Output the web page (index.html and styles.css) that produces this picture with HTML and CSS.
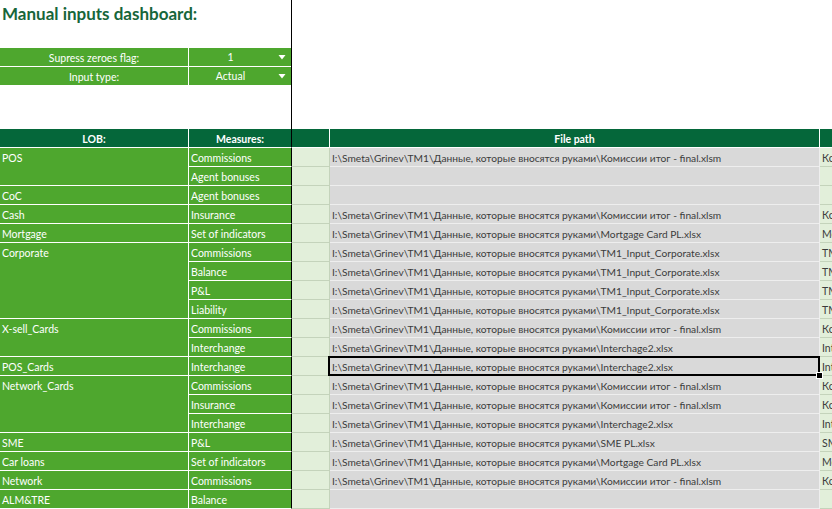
FILE: index.html
```html
<!DOCTYPE html>
<html lang="ru">
<head>
    <meta charset="UTF-8">
    <title>Manual inputs dashboard</title>
    <link rel="stylesheet" href="styles.css">
</head>
<body>
    <div class="top">
        <div class="top-pane">
            <h1 class="title">Manual inputs dashboard:</h1>
            <div class="filters">
                <div class="f-label">Supress zeroes flag:</div>
                <div class="f-value"><span>1</span><svg class="drop" width="8" height="6" viewBox="0 0 8 6"><path d="M0.5 1 H7.5 L4 5.5 Z" fill="#fff"/></svg></div>
                <div class="f-label">Input type:</div>
                <div class="f-value"><span>Actual</span><svg class="drop" width="8" height="6" viewBox="0 0 8 6"><path d="M0.5 1 H7.5 L4 5.5 Z" fill="#fff"/></svg></div>
            </div>
        </div>
    </div>

    <div class="sheet">
        <div class="cell h">LOB:</div>
        <div class="cell h frz">Measures:</div>
        <div class="cell h"></div>
        <div class="cell h">File path</div>
        <div class="cell h"></div>

        <div class="cell g lob span2">POS</div>
        <div class="cell g frz">Commissions</div>
        <div class="cell c"></div>
        <div class="cell d">I:\Smeta\Grinev\TM1\Данные, которые вносятся руками\Комиссии итог - final.xlsm</div>
        <div class="cell e">Комиссии итог</div>

        <div class="cell g frz">Agent bonuses</div>
        <div class="cell c"></div>
        <div class="cell d"></div>
        <div class="cell e"></div>

        <div class="cell g">CoC</div>
        <div class="cell g frz">Agent bonuses</div>
        <div class="cell c"></div>
        <div class="cell d"></div>
        <div class="cell e"></div>

        <div class="cell g">Cash</div>
        <div class="cell g frz">Insurance</div>
        <div class="cell c"></div>
        <div class="cell d">I:\Smeta\Grinev\TM1\Данные, которые вносятся руками\Комиссии итог - final.xlsm</div>
        <div class="cell e">Комиссии итог</div>

        <div class="cell g">Mortgage</div>
        <div class="cell g frz">Set of indicators</div>
        <div class="cell c"></div>
        <div class="cell d">I:\Smeta\Grinev\TM1\Данные, которые вносятся руками\Mortgage Card PL.xlsx</div>
        <div class="cell e">Mortgage Card PL</div>

        <div class="cell g lob span4">Corporate</div>
        <div class="cell g frz">Commissions</div>
        <div class="cell c"></div>
        <div class="cell d">I:\Smeta\Grinev\TM1\Данные, которые вносятся руками\TM1_Input_Corporate.xlsx</div>
        <div class="cell e">TM1_Input_Corporate</div>

        <div class="cell g frz">Balance</div>
        <div class="cell c"></div>
        <div class="cell d">I:\Smeta\Grinev\TM1\Данные, которые вносятся руками\TM1_Input_Corporate.xlsx</div>
        <div class="cell e">TM1_Input_Corporate</div>

        <div class="cell g frz">P&amp;L</div>
        <div class="cell c"></div>
        <div class="cell d">I:\Smeta\Grinev\TM1\Данные, которые вносятся руками\TM1_Input_Corporate.xlsx</div>
        <div class="cell e">TM1_Input_Corporate</div>

        <div class="cell g frz">Liability</div>
        <div class="cell c"></div>
        <div class="cell d">I:\Smeta\Grinev\TM1\Данные, которые вносятся руками\TM1_Input_Corporate.xlsx</div>
        <div class="cell e">TM1_Input_Corporate</div>

        <div class="cell g lob span2">X-sell_Cards</div>
        <div class="cell g frz">Commissions</div>
        <div class="cell c"></div>
        <div class="cell d">I:\Smeta\Grinev\TM1\Данные, которые вносятся руками\Комиссии итог - final.xlsm</div>
        <div class="cell e">Комиссии итог</div>

        <div class="cell g frz">Interchange</div>
        <div class="cell c"></div>
        <div class="cell d">I:\Smeta\Grinev\TM1\Данные, которые вносятся руками\Interchage2.xlsx</div>
        <div class="cell e">Interchage2</div>

        <div class="cell g">POS_Cards</div>
        <div class="cell g frz">Interchange</div>
        <div class="cell c"></div>
        <div class="cell d sel">I:\Smeta\Grinev\TM1\Данные, которые вносятся руками\Interchage2.xlsx</div>
        <div class="cell e">Interchage2</div>

        <div class="cell g lob span3">Network_Cards</div>
        <div class="cell g frz">Commissions</div>
        <div class="cell c"></div>
        <div class="cell d">I:\Smeta\Grinev\TM1\Данные, которые вносятся руками\Комиссии итог - final.xlsm</div>
        <div class="cell e">Комиссии итог</div>

        <div class="cell g frz">Insurance</div>
        <div class="cell c"></div>
        <div class="cell d">I:\Smeta\Grinev\TM1\Данные, которые вносятся руками\Комиссии итог - final.xlsm</div>
        <div class="cell e">Комиссии итог</div>

        <div class="cell g frz">Interchange</div>
        <div class="cell c"></div>
        <div class="cell d">I:\Smeta\Grinev\TM1\Данные, которые вносятся руками\Interchage2.xlsx</div>
        <div class="cell e">Interchage2</div>

        <div class="cell g">SME</div>
        <div class="cell g frz">P&amp;L</div>
        <div class="cell c"></div>
        <div class="cell d">I:\Smeta\Grinev\TM1\Данные, которые вносятся руками\SME PL.xlsx</div>
        <div class="cell e">SME PL</div>

        <div class="cell g">Car loans</div>
        <div class="cell g frz">Set of indicators</div>
        <div class="cell c"></div>
        <div class="cell d">I:\Smeta\Grinev\TM1\Данные, которые вносятся руками\Mortgage Card PL.xlsx</div>
        <div class="cell e">Mortgage Card PL</div>

        <div class="cell g">Network</div>
        <div class="cell g frz">Commissions</div>
        <div class="cell c"></div>
        <div class="cell d">I:\Smeta\Grinev\TM1\Данные, которые вносятся руками\Комиссии итог - final.xlsm</div>
        <div class="cell e">Комиссии итог</div>

        <div class="cell g">ALM&amp;TRE</div>
        <div class="cell g frz">Balance</div>
        <div class="cell c"></div>
        <div class="cell d"></div>
        <div class="cell e"></div>
    </div>
</body>
</html>
```

FILE: styles.css
```css
body {
    margin: 0;
    width: 832px;
    height: 509px;
    overflow: hidden;
    background: #fff;
    font-family: Lato, 'Liberation Sans', sans-serif;
    font-size: 10.5px;
    color: #333;
}

.top {
    display: flex;
    height: 129px;
}

.top-pane {
    width: 291px;
    border-right: 1px solid #000;
}

.title {
    margin: 0;
    height: 48px;
    box-sizing: border-box;
    padding: 4px 0 0 2px;
    font-size: 17px;
    line-height: 20px;
    font-weight: bold;
    color: #17663a;
}

.filters {
    display: grid;
    grid-template-columns: 189px 102px;
    grid-auto-rows: 19px;
}

.f-label,
.f-value {
    box-sizing: border-box;
    background: #4ea72e;
    color: #fff;
    border-bottom: 1px solid #fff;
    line-height: 20px;
    text-align: center;
}

.f-label {
    border-right: 1px solid #fff;
}

.f-value {
    display: flex;
    align-items: center;
}

.f-value span {
    flex: 1;
    text-align: center;
}

.drop {
    margin: 0 5px 0 6px;
}

.sheet {
    display: grid;
    width: 1120px;
    grid-template-columns: 189px 103px 38px 490px 300px;
    grid-auto-rows: 19px;
}

.cell {
    box-sizing: border-box;
    border-right: 1px solid #c9c9c9;
    border-bottom: 1px solid #c9c9c9;
    padding: 0 2px;
    line-height: 20px;
    white-space: nowrap;
}

.h {
    background: #05673a;
    color: #fff;
    font-weight: bold;
    text-align: center;
    border-color: #fff;
}

.g {
    background: #4ea72e;
    color: #fff;
    border-color: #fff;
    overflow: hidden;
}

.frz {
    border-right-color: #000;
}

.span2 { grid-row: span 2; }
.span3 { grid-row: span 3; }
.span4 { grid-row: span 4; }

.c {
    background: #e2efda;
    border-color: #c4d3bb;
}

.d {
    background: #d9d9d9;
    border-color: #eeeeee;
    color: #3b3b3b;
    font-size: 10.2px;
}

.e {
    background: #e2efda;
    border-color: #c4d3bb;
    color: #3b3b3b;
}

.sel {
    position: relative;
}

.sel::after {
    content: '';
    position: absolute;
    left: -2px;
    top: -1px;
    right: -1px;
    bottom: -1px;
    border: 2px solid #000;
}

.sel::before {
    content: '';
    position: absolute;
    right: -4px;
    bottom: -4px;
    width: 5px;
    height: 5px;
    background: #000;
    border: 1px solid #fff;
    z-index: 2;
}
```
